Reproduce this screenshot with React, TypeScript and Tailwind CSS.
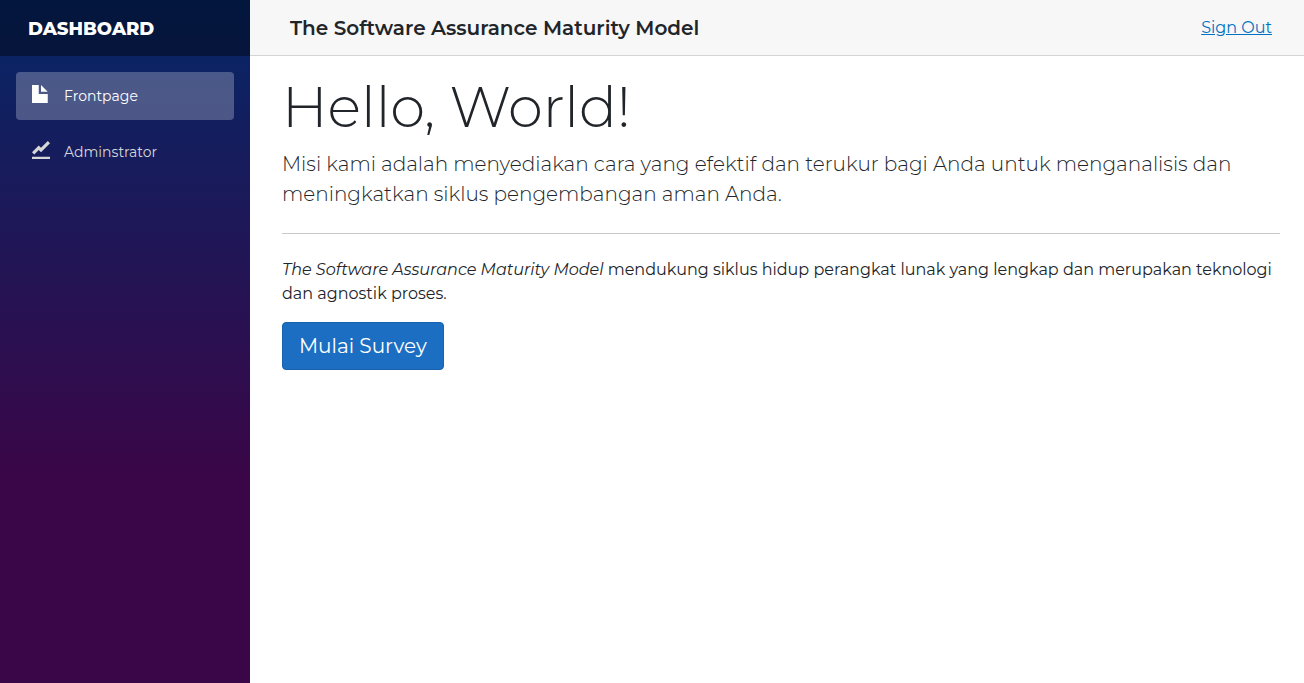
function FileIcon() {
  return (
    <svg viewBox="0 0 8 8" className="size-[18px] shrink-0" fill="currentColor" aria-hidden="true">
      <path d="M0 0v8h7v-4h-4v-4h-3zm4 0v3h3l-3-3z" />
    </svg>
  );
}

function GraphIcon() {
  return (
    <svg viewBox="0 0 8 8" className="size-[18px] shrink-0" fill="currentColor" aria-hidden="true">
      <path d="M7.03 0l-3.03 3-1-1-3 3.03 1 1 2-2.03 1 1 4-4-.97-1zm-7.03 7v1h8v-1h-8z" />
    </svg>
  );
}

function Sidebar() {
  return (
    <aside className="w-[250px] shrink-0 bg-[linear-gradient(180deg,#052767_0%,#3a0647_70%)]">
      <div className="flex h-14 items-center bg-black/40 px-7">
        <a href="#" className="pt-0.5 text-lg font-extrabold text-white">DASHBOARD</a>
      </div>
      <nav className="flex flex-col gap-2 p-4">
        <a href="#frontpage" aria-current="page" className="flex h-12 items-center gap-[14px] rounded bg-white/25 px-4 text-sm text-white">
          <span className="pb-1"><FileIcon /></span>
          Frontpage
        </a>
        <a href="#administrator" className="flex h-12 items-center gap-[14px] rounded px-4 text-sm text-[#d7d7d7]">
          <span className="pb-1"><GraphIcon /></span>
          Adminstrator
        </a>
      </nav>
    </aside>
  );
}

export default function App() {
  return (
    <div className="flex min-h-screen bg-white font-['Montserrat','Inter',sans-serif] text-base text-[#212529]">
      <Sidebar />
      <div className="min-w-0 flex-1">
        <header className="flex h-14 items-center justify-between border-b border-[#d6d5d5] bg-[#f7f7f7] pr-8 pl-10">
          <div className="text-xl font-semibold">The Software Assurance Maturity Model</div>
          <a href="#sign-out" className="text-[#0071c1] underline">Sign Out</a>
        </header>
        <main className="pt-[18px] pr-6 pl-8">
          <h1 className="mb-2 text-[56px] leading-[67px] font-light">Hello, World!</h1>
          <p className="text-xl leading-[30px] font-light">
            Misi kami adalah menyediakan cara yang efektif dan terukur bagi Anda untuk menganalisis dan meningkatkan siklus pengembangan aman Anda.
          </p>
          <hr className="my-6 border-[#c8c9ca]" />
          <p className="mb-4 leading-6">
            <em>The Software Assurance Maturity Model</em> mendukung siklus hidup perangkat lunak yang lengkap dan merupakan teknologi dan agnostik proses.
          </p>
          <button type="button" className="h-12 rounded border border-[#1861ac] bg-[#1b6ec2] px-4 text-xl text-white">
            Mulai Survey
          </button>
        </main>
      </div>
    </div>
  );
}
